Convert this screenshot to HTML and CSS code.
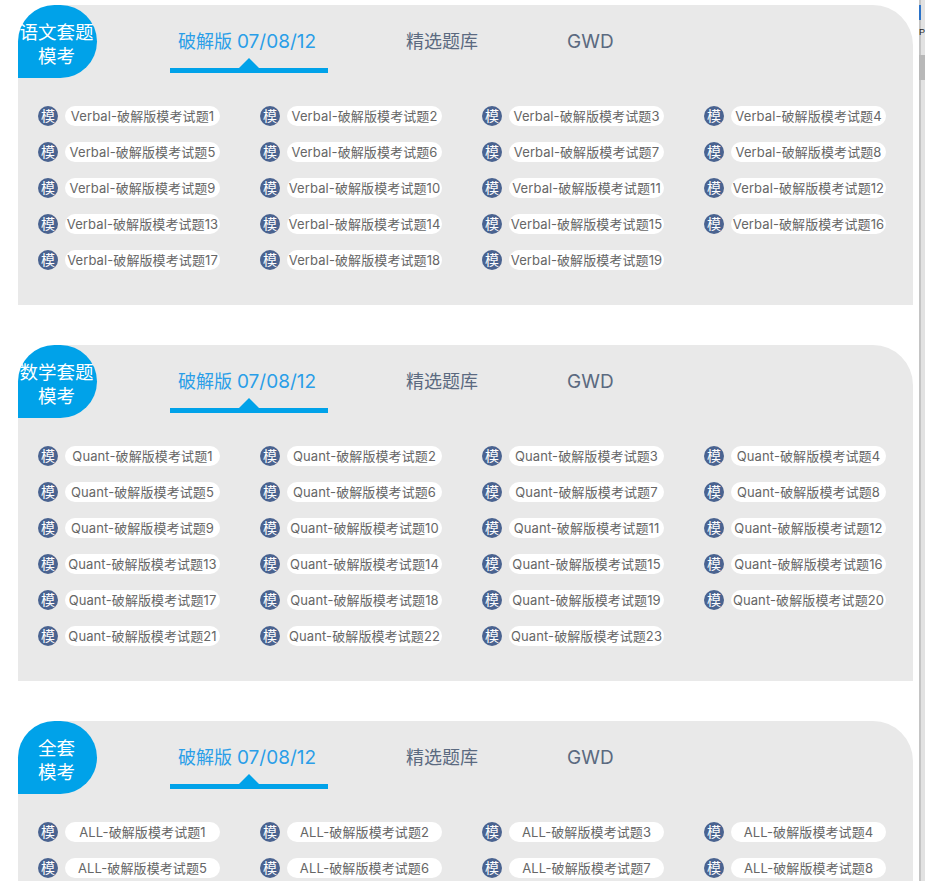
FILE: index.html
```html
<!DOCTYPE html>
<html lang="zh">
<head>
<meta charset="utf-8">
<title>模考</title>
<link rel="stylesheet" href="styles.css">
</head>
<body>
<div class="page">
  <section class="panel">
    <header class="head">
      <div class="badge">语文套题<br>模考</div>
      <nav class="tabs">
        <a class="tab active">破解版 <b>07/08/12</b></a>
        <a class="tab t2">精选题库</a>
        <a class="tab t3"><b>GWD</b></a>
      </nav>
    </header>
    <ul class="list">
      <li><i>模</i><span>Verbal-破解版模考试题1</span></li><li><i>模</i><span>Verbal-破解版模考试题2</span></li><li><i>模</i><span>Verbal-破解版模考试题3</span></li><li><i>模</i><span>Verbal-破解版模考试题4</span></li>
      <li><i>模</i><span>Verbal-破解版模考试题5</span></li><li><i>模</i><span>Verbal-破解版模考试题6</span></li><li><i>模</i><span>Verbal-破解版模考试题7</span></li><li><i>模</i><span>Verbal-破解版模考试题8</span></li>
      <li><i>模</i><span>Verbal-破解版模考试题9</span></li><li><i>模</i><span>Verbal-破解版模考试题10</span></li><li><i>模</i><span>Verbal-破解版模考试题11</span></li><li><i>模</i><span>Verbal-破解版模考试题12</span></li>
      <li><i>模</i><span>Verbal-破解版模考试题13</span></li><li><i>模</i><span>Verbal-破解版模考试题14</span></li><li><i>模</i><span>Verbal-破解版模考试题15</span></li><li><i>模</i><span>Verbal-破解版模考试题16</span></li>
      <li><i>模</i><span>Verbal-破解版模考试题17</span></li><li><i>模</i><span>Verbal-破解版模考试题18</span></li><li><i>模</i><span>Verbal-破解版模考试题19</span></li>
    </ul>
  </section>
  <section class="panel">
    <header class="head">
      <div class="badge">数学套题<br>模考</div>
      <nav class="tabs">
        <a class="tab active">破解版 <b>07/08/12</b></a>
        <a class="tab t2">精选题库</a>
        <a class="tab t3"><b>GWD</b></a>
      </nav>
    </header>
    <ul class="list">
      <li><i>模</i><span>Quant-破解版模考试题1</span></li><li><i>模</i><span>Quant-破解版模考试题2</span></li><li><i>模</i><span>Quant-破解版模考试题3</span></li><li><i>模</i><span>Quant-破解版模考试题4</span></li>
      <li><i>模</i><span>Quant-破解版模考试题5</span></li><li><i>模</i><span>Quant-破解版模考试题6</span></li><li><i>模</i><span>Quant-破解版模考试题7</span></li><li><i>模</i><span>Quant-破解版模考试题8</span></li>
      <li><i>模</i><span>Quant-破解版模考试题9</span></li><li><i>模</i><span>Quant-破解版模考试题10</span></li><li><i>模</i><span>Quant-破解版模考试题11</span></li><li><i>模</i><span>Quant-破解版模考试题12</span></li>
      <li><i>模</i><span>Quant-破解版模考试题13</span></li><li><i>模</i><span>Quant-破解版模考试题14</span></li><li><i>模</i><span>Quant-破解版模考试题15</span></li><li><i>模</i><span>Quant-破解版模考试题16</span></li>
      <li><i>模</i><span>Quant-破解版模考试题17</span></li><li><i>模</i><span>Quant-破解版模考试题18</span></li><li><i>模</i><span>Quant-破解版模考试题19</span></li><li><i>模</i><span>Quant-破解版模考试题20</span></li>
      <li><i>模</i><span>Quant-破解版模考试题21</span></li><li><i>模</i><span>Quant-破解版模考试题22</span></li><li><i>模</i><span>Quant-破解版模考试题23</span></li>
    </ul>
  </section>
  <section class="panel">
    <header class="head">
      <div class="badge">全套<br>模考</div>
      <nav class="tabs">
        <a class="tab active">破解版 <b>07/08/12</b></a>
        <a class="tab t2">精选题库</a>
        <a class="tab t3"><b>GWD</b></a>
      </nav>
    </header>
    <ul class="list">
      <li><i>模</i><span>ALL-破解版模考试题1</span></li><li><i>模</i><span>ALL-破解版模考试题2</span></li><li><i>模</i><span>ALL-破解版模考试题3</span></li><li><i>模</i><span>ALL-破解版模考试题4</span></li>
      <li><i>模</i><span>ALL-破解版模考试题5</span></li><li><i>模</i><span>ALL-破解版模考试题6</span></li><li><i>模</i><span>ALL-破解版模考试题7</span></li><li><i>模</i><span>ALL-破解版模考试题8</span></li>
    </ul>
  </section>
</div>
<div class="edge">
  <div class="edge-mark"></div>
  <div class="edge-text">P</div>
  <div class="edge-thumb"></div>
</div>
</body>
</html>
```
FILE: styles.css
```css
html, body { margin: 0; padding: 0; height: 881px; overflow: hidden; background: #fff; }
body { font-family: Inter, "Noto Sans CJK SC", sans-serif; }
.page { width: 895px; padding: 5px 0 0 18px; }
.panel { background: #e9e9e9; border-radius: 40px 40px 0 0; margin-bottom: 40px; padding-bottom: 19px; }
.head { display: flex; height: 68px; }
.badge { width: 79px; height: 73px; background: #00a2e9; border-radius: 40px 40px 40px 0; color: #fff; font-size: 18.5px; line-height: 24px; text-align: center; padding: 15px 2px 0 0; box-sizing: border-box; white-space: nowrap; flex: none; }
.tabs { display: flex; margin-left: 73px; }
.tab { font-size: 18px; color: #5b6a80; line-height: 24px; padding-top: 25px; display: block; text-align: center; box-sizing: border-box; height: 68px; }
.tab b { font-size: 19px; font-weight: 400; }
.tab.active { width: 158px; padding-right: 4px; white-space: nowrap; color: #2a9ee8; border-bottom: 5px solid #00a2e9; position: relative; }
.tab.active::after { content: ""; position: absolute; left: 69px; bottom: 0; border: 10px solid transparent; border-top: 0; border-bottom-color: #00a2e9; }
.t2 { margin-left: 78px; }
.t3 { margin-left: 89px; }
.list { list-style: none; margin: 0; padding: 33px 0 0 20px; display: grid; grid-template-columns: repeat(4, 222px); grid-auto-rows: 36px; }
.list li { display: flex; align-items: center; height: 20px; }
.list i { width: 20px; height: 20px; border-radius: 50%; background: #4a6390; color: #fff; font-size: 14px; line-height: 20px; text-align: center; font-style: normal; flex: none; }
.list span { margin-left: 7px; width: 155px; height: 20px; border-radius: 10px; background: #fff; color: #666; font-size: 13px; letter-spacing: .1px; line-height: 20px; text-align: center; white-space: nowrap; }
.edge { position: absolute; left: 919px; top: 0; width: 6px; height: 881px; overflow: hidden; background: linear-gradient(90deg, #c4c4c4 2px, #e2e2e2 2px); }
.edge-mark { width: 2px; height: 15px; margin-top: 5px; background: #2a72c8; }
.edge-text { height: 35px; font-size: 9px; line-height: 24px; color: #222; font-family: "Liberation Sans", sans-serif; }
.edge-thumb { height: 25px; background: #b8b8b8; }
```
